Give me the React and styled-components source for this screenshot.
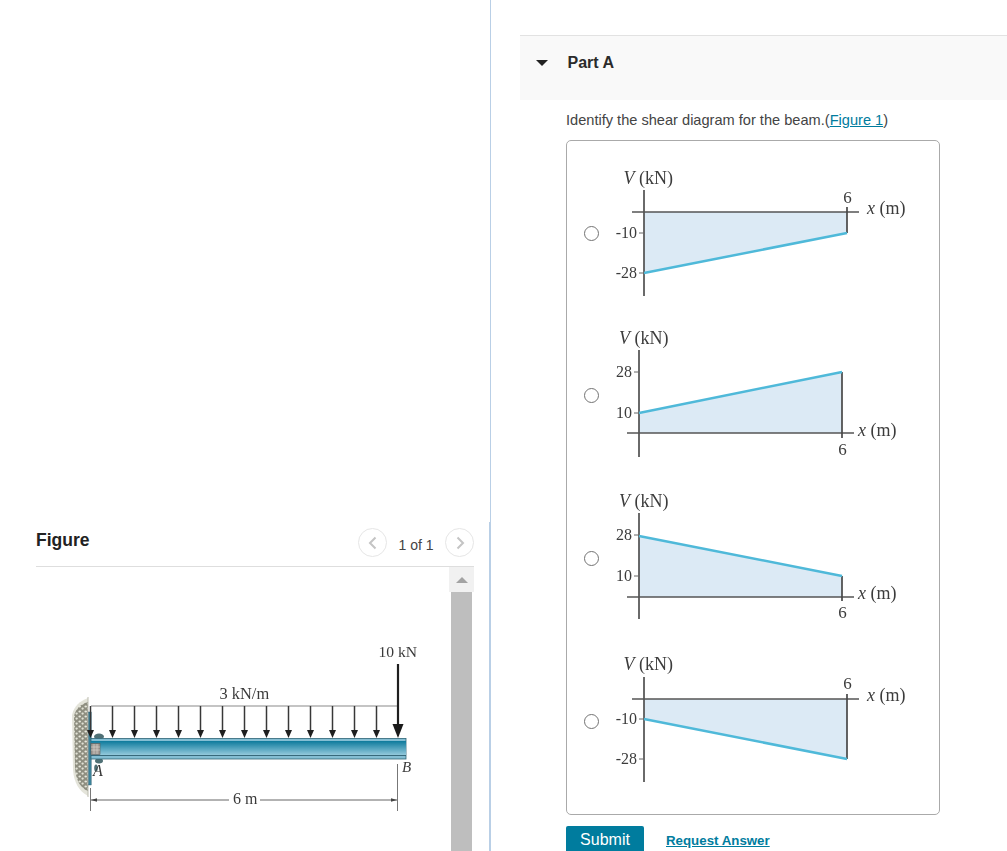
import React from "react";
import styled, { createGlobalStyle } from "styled-components";

const Global = createGlobalStyle`
  html, body { margin: 0; padding: 0; height: 851px; overflow: hidden; background: #fff; }
  body { font-family: "Liberation Sans", Arial, sans-serif; color: #333; }
  * { box-sizing: border-box; }
`;

const Page = styled.div`
  display: flex;
  width: 1007px;
  height: 851px;
  overflow: hidden;
`;

const FigureColumn = styled.aside`
  width: 490px;
  flex: none;
  padding-top: 522px;
`;

const FigurePanel = styled.section`
  height: 329px;
  padding: 0 15px 0 36px;
  border-right: 1px solid #b9cfe6;
`;

const FigureHeader = styled.header`
  display: flex;
  justify-content: space-between;
  align-items: flex-start;
  height: 45px;
  padding-top: 6px;
  border-bottom: 1px solid #dedede;
`;

const FigureTitle = styled.h2`
  margin: 0;
  font-size: 17.5px;
  line-height: 24px;
  font-weight: 700;
  color: #222;
`;

const Pager = styled.div`
  display: flex;
  align-items: center;
  width: 116px;
  justify-content: space-between;
`;

const PagerButton = styled.button`
  width: 29px;
  height: 29px;
  padding: 0;
  display: flex;
  align-items: center;
  justify-content: center;
  border: 1px solid #e6e6e6;
  border-radius: 50%;
  background: #fff;
`;

const PagerText = styled.span`
  font-size: 14px;
  line-height: 20px;
  padding-top: 4px;
  color: #444;
`;

const FigureBody = styled.div`
  display: flex;
  height: 284px;
  overflow: hidden;
`;

const FigureCanvas = styled.div`
  flex: 1;
  padding: 73px 0 0 24px;
`;

const BeamSvg = styled.svg`
  display: block;
  width: 370px;
  height: 180px;
  filter: blur(0.35px);
`;

const Scrollbar = styled.div`
  width: 25px;
  flex: none;
  display: flex;
  flex-direction: column;
`;

const ScrollButton = styled.div`
  height: 25px;
  background: #f1f1f1;
  display: flex;
  align-items: center;
  justify-content: center;
`;

const ScrollTriangle = styled.span`
  width: 0;
  height: 0;
  border-left: 6px solid transparent;
  border-right: 6px solid transparent;
  border-bottom: 6px solid #a3a3a3;
`;

const ScrollThumb = styled.div`
  flex: 1;
  margin: 0 2px;
  background: #bebebe;
`;

const QuestionColumn = styled.main`
  flex: 1;
  padding-top: 35px;
  border-left: 1px solid #b9cfe6;
`;

const PartHeader = styled.div`
  display: flex;
  align-items: center;
  height: 65px;
  margin-left: 29px;
  padding: 0 0 11px 16px;
  background: #f9f9f9;
  border-top: 1px solid #e2e2e2;
`;

const Caret = styled.span`
  width: 0;
  height: 0;
  margin-right: 19.5px;
  border-left: 6px solid transparent;
  border-right: 6px solid transparent;
  border-top: 6px solid #222;
`;

const PartTitle = styled.h3`
  margin: 0;
  font-size: 16px;
  font-weight: 700;
  color: #2b2b2b;
`;

const PartContent = styled.div`
  padding-left: 75px;
`;

const Prompt = styled.p`
  margin: 0;
  height: 40px;
  padding-top: 10px;
  font-size: 14.6px;
  line-height: 20px;
  color: #444;
`;

const FigureLink = styled.a`
  color: #007c9e;
  text-decoration: underline;
`;

const ChoiceBox = styled.div`
  width: 374px;
  height: 675px;
  padding: 27px 0 0 17px;
  border: 1px solid #aaa;
  border-radius: 5px;
`;

const Choice = styled.label`
  display: flex;
  align-items: flex-start;
  gap: 7px;
  height: 132px;
  margin-top: ${(p) => p.$gap}px;
`;

const Radio = styled.input`
  appearance: none;
  flex: none;
  width: 15px;
  height: 15px;
  margin: ${(p) => p.$offset}px 0 0;
  border: 1.4px solid #737373;
  border-radius: 50%;
  background: #fff;
`;

const DiagramSvg = styled.svg`
  display: block;
  width: 310px;
  height: 132px;
  filter: blur(0.35px);
`;

const Actions = styled.div`
  display: flex;
  align-items: center;
  gap: 22px;
  margin-top: 11px;
`;

const SubmitButton = styled.button`
  width: 78px;
  height: 28px;
  padding: 0;
  border: 0;
  border-radius: 2px;
  background: #007c9e;
  color: #fff;
  font: 16px/28px "Liberation Sans", Arial, sans-serif;
`;

const RequestLink = styled.a`
  font-size: 13.3px;
  font-weight: 700;
  color: #007c9e;
  text-decoration: underline;
`;

const serif = '"Liberation Serif", "Times New Roman", serif';

const choices = [
  {
    top: 168, gap: 0, radio: 58, ox: 644, axisTop: 190, axisBottom: 296, baseY: 212,
    rightTop: 207, rightBottom: 233, from: 273, to: 233, rx: 847, fillBase: 212,
    vY: 184, vX: 623.5, sixY: 203, xLabelY: 214, xLabelX: 867,
    ticks: [{ t: "-10", y: 233 }, { t: "-28", y: 273 }],
  },
  {
    top: 328, gap: 28, radio: 60, ox: 639, axisTop: 350, axisBottom: 457, baseY: 433,
    rightTop: 372, rightBottom: 438, from: 413, to: 372, rx: 842, fillBase: 433,
    vY: 344, vX: 619, sixY: 455, xLabelY: 436, xLabelX: 858,
    ticks: [{ t: "28", y: 372 }, { t: "10", y: 413 }],
  },
  {
    top: 491, gap: 31, radio: 59.5, ox: 639, axisTop: 513, axisBottom: 619, baseY: 597,
    rightTop: 576, rightBottom: 601, from: 536, to: 576, rx: 842, fillBase: 597,
    vY: 507, vX: 619, sixY: 618, xLabelY: 599, xLabelX: 858,
    ticks: [{ t: "28", y: 535 }, { t: "10", y: 576 }],
  },
  {
    top: 654, gap: 31, radio: 59.5, ox: 644, axisTop: 677, axisBottom: 782, baseY: 699,
    rightTop: 694, rightBottom: 759, from: 719, to: 759, rx: 847, fillBase: 699,
    vY: 670, vX: 623.5, sixY: 689, xLabelY: 701, xLabelX: 867,
    ticks: [{ t: "-10", y: 719 }, { t: "-28", y: 759 }],
  },
];

function Diagram({ c }) {
  return (
    <DiagramSvg viewBox={`606 ${c.top} 310 132`} fontFamily={serif} fill="#3c3c3c">
      <polygon
        points={`${c.ox},${c.fillBase} ${c.rx},${c.fillBase} ${c.rx},${c.to} ${c.ox},${c.from}`}
        fill="#dceaf5"
      />
      <line x1={c.ox} x2={c.ox} y1={c.axisTop} y2={c.axisBottom} stroke="#505050" strokeWidth="1.7" />
      <line x1={c.ox - 12} x2={c.ox + 215} y1={c.baseY} y2={c.baseY} stroke="#555" strokeWidth="1.7" />
      <line x1={c.rx} x2={c.rx} y1={c.rightTop} y2={c.rightBottom} stroke="#484848" strokeWidth="1.7" />
      <line x1={c.ox} x2={c.rx} y1={c.from} y2={c.to} stroke="#4fb9d9" strokeWidth="2.5" />
      {c.ticks.map((k) => (
        <g key={k.t}>
          <line x1={c.ox - 5} x2={c.ox} y1={k.y} y2={k.y} stroke="#666" strokeWidth="1" />
          <text x={c.ox - 7} y={k.y + 5} fontSize="16" textAnchor="end">{k.t}</text>
        </g>
      ))}
      <text x={c.vX} y={c.vY} fontSize="18">
        <tspan fontStyle="italic">V</tspan> (kN)
      </text>
      <text x={c.rx + 0.5} y={c.sixY} fontSize="17" textAnchor="middle">6</text>
      <text x={c.xLabelX} y={c.xLabelY} fontSize="18">
        <tspan fontStyle="italic">x</tspan> (m)
      </text>
    </DiagramSvg>
  );
}

const arrowXs = Array.from({ length: 14 }, (_, i) => 90.5 + i * 22);

function Beam() {
  return (
    <BeamSvg viewBox="60 640 370 180" fontFamily={serif} fill="#3a3a3a">
      <defs>
        <linearGradient id="web" x1="0" x2="0" y1="0" y2="1">
          <stop offset="0" stopColor="#0d7a9c" />
          <stop offset="1" stopColor="#93c9dc" />
        </linearGradient>
        <pattern id="stones" width="6" height="5" patternUnits="userSpaceOnUse">
          <rect width="6" height="5" fill="#8e8e80" />
          <ellipse cx="1.7" cy="1.4" rx="1.3" ry="1" fill="#e8e8dc" />
          <ellipse cx="4.6" cy="3.6" rx="1.2" ry="1.1" fill="#e2e2d6" />
        </pattern>
      </defs>

      <path d="M88 698 C80 701 74 706 72 715 L73 770 C74 783 79 791 88 796 Z" fill="#e4e4da" />
      <path d="M88 702 C81 704 76 708 74 716 L75 768 C76 780 80 788 88 791 Z" fill="url(#stones)" />
      <line x1="88" x2="88" y1="697" y2="797" stroke="#bdbdb0" strokeWidth="1" />
      <rect x="88.6" y="712" width="2.6" height="73" fill="#3b8299" stroke="#27566a" strokeWidth="0.4" />
      <ellipse cx="99" cy="736.5" rx="5" ry="3" fill="#4f7075" />
      <ellipse cx="99" cy="761" rx="4" ry="2.4" fill="#4f7075" />
      <ellipse cx="96" cy="768" rx="1.8" ry="3.5" fill="#4f7075" />

      <rect x="91" y="738.4" width="315" height="20.6" fill="#84bed3" stroke="#2f6577" strokeWidth="0.8" />
      <rect x="91" y="741" width="315" height="14" fill="url(#web)" />
      <line x1="91" x2="406" y1="755.5" y2="755.5" stroke="#2f5f70" strokeWidth="0.9" />
      <rect x="91" y="743.5" width="9" height="11" fill="#a39c96" stroke="#5f5a55" strokeWidth="0.6" />
      <path d="M91 747h9M91 750h9M94 744v10M97 744v10" stroke="#ddd8d2" strokeWidth="0.6" />

      <line x1="91" x2="398" y1="706" y2="706" stroke="#8a8a8a" strokeWidth="1.2" />
      {arrowXs.map((x) => (
        <g key={x}>
          <line x1={x} x2={x} y1="706" y2="731" stroke="#383838" strokeWidth="1.5" />
          <polygon points={`${x - 3.5},730 ${x + 3.5},730 ${x},738`} fill="#1f1f1f" />
        </g>
      ))}
      <line x1="398" x2="398" y1="664" y2="726" stroke="#1f1f1f" strokeWidth="2.2" />
      <polygon points="392.5,724 403.5,724 398,738" fill="#1a1a1a" />

      <line x1="90.5" x2="90.5" y1="788" y2="811" stroke="#777" strokeWidth="1" />
      <line x1="397.5" x2="397.5" y1="764" y2="811" stroke="#777" strokeWidth="1" />
      <line x1="91" x2="229" y1="800" y2="800" stroke="#666" strokeWidth="1" />
      <line x1="260" x2="397" y1="800" y2="800" stroke="#666" strokeWidth="1" />
      <polygon points="91,800 97,798.2 97,801.8" fill="#444" />
      <polygon points="397,800 391,798.2 391,801.8" fill="#444" />

      <text x="378.5" y="657" fontSize="15.6">10 kN</text>
      <text x="219.5" y="699" fontSize="16.4">3 kN/m</text>
      <text x="93" y="776" fontSize="16" fontStyle="italic">A</text>
      <text x="402" y="772" fontSize="15" fontStyle="italic">B</text>
      <text x="233" y="804" fontSize="16">6 m</text>
    </BeamSvg>
  );
}

const Chevron = ({ d }) => (
  <svg width="12" height="14" viewBox="0 0 12 14" fill="none" stroke="#c4c4c4" strokeWidth="2">
    <path d={d} />
  </svg>
);

export default function App() {
  return (
    <>
      <Global />
      <Page>
        <FigureColumn>
          <FigurePanel>
            <FigureHeader>
              <FigureTitle>Figure</FigureTitle>
              <Pager>
                <PagerButton aria-label="Previous"><Chevron d="M8.5 1.5 3 7l5.5 5.5" /></PagerButton>
                <PagerText>1 of 1</PagerText>
                <PagerButton aria-label="Next"><Chevron d="M3.5 1.5 9 7l-5.5 5.5" /></PagerButton>
              </Pager>
            </FigureHeader>
            <FigureBody>
              <FigureCanvas><Beam /></FigureCanvas>
              <Scrollbar>
                <ScrollButton><ScrollTriangle /></ScrollButton>
                <ScrollThumb />
              </Scrollbar>
            </FigureBody>
          </FigurePanel>
        </FigureColumn>
        <QuestionColumn>
          <PartHeader>
            <Caret />
            <PartTitle>Part A</PartTitle>
          </PartHeader>
          <PartContent>
            <Prompt>
              Identify the shear diagram for the beam.(<FigureLink href="#">Figure 1</FigureLink>)
            </Prompt>
            <ChoiceBox>
              {choices.map((c) => (
                <Choice key={c.top} $gap={c.gap}>
                  <Radio type="radio" name="shear" $offset={c.radio} />
                  <Diagram c={c} />
                </Choice>
              ))}
            </ChoiceBox>
            <Actions>
              <SubmitButton>Submit</SubmitButton>
              <RequestLink href="#">Request Answer</RequestLink>
            </Actions>
          </PartContent>
        </QuestionColumn>
      </Page>
    </>
  );
}
